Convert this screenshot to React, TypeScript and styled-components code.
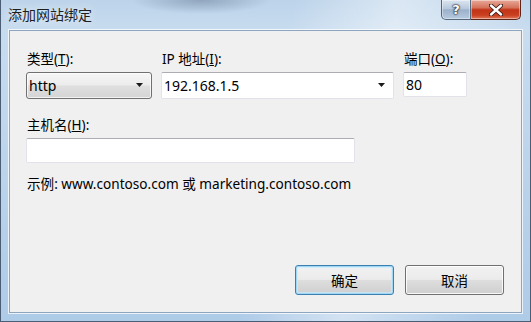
import styled, { createGlobalStyle } from 'styled-components';

const GlobalStyle = createGlobalStyle`
  html, body {
    margin: 0;
    padding: 0;
    width: 531px;
    height: 322px;
    overflow: hidden;
    background: #bcd3ea;
  }
  * {
    box-sizing: border-box;
  }
`;

const uiFont = `"Noto Sans", "Noto Sans CJK SC", "Liberation Sans", sans-serif`;

const Window = styled.div`
  width: 531px;
  height: 322px;
  display: flex;
  flex-direction: column;
  border: 1px solid #4b5d72;
  border-top: none;
  background:
    radial-gradient(ellipse 70px 14px at 200px 0px, rgba(90, 110, 135, 0.45), rgba(90, 110, 135, 0) 100%),
    linear-gradient(100deg, rgba(255, 255, 255, 0) 50%, rgba(255, 255, 255, 0.45) 68%, rgba(255, 255, 255, 0) 92%),
    linear-gradient(to bottom, #bcd3ea 0%, #c8dcef 30px, #aecbe8 100%);
  font-family: ${uiFont};
  color: #000;
`;

const TitleBar = styled.div`
  height: 30px;
  display: flex;
  align-items: flex-start;
  padding-left: 7px;
  flex-shrink: 0;
`;

const Title = styled.div`
  margin-top: 6px;
  font-size: 14px;
  line-height: 18px;
  color: #1e1e1e;
  text-shadow: 0 0 8px rgba(255, 255, 255, 0.9);
`;

const CaptionButtons = styled.div`
  margin-left: auto;
  margin-right: 9px;
  display: flex;
`;

const CaptionButton = styled.div<{ $kind: 'help' | 'close' }>`
  height: 20px;
  width: ${(p) => (p.$kind === 'help' ? '30px' : '50px')};
  display: flex;
  align-items: center;
  justify-content: center;
  border: 1px solid ${(p) => (p.$kind === 'help' ? '#56677c' : '#5e261b')};
  border-top: none;
  border-left-width: ${(p) => (p.$kind === 'close' ? '0' : '1px')};
  border-radius: ${(p) => (p.$kind === 'help' ? '0 0 0 5px' : '0 0 5px 0')};
  box-shadow: inset 0 0 0 1px rgba(255, 255, 255, 0.4);
  background: ${(p) =>
    p.$kind === 'help'
      ? 'linear-gradient(to bottom, #dbe5f0 0%, #b8c9dc 45%, #9cb1ca 52%, #b6cae0 100%)'
      : 'linear-gradient(to bottom, #e8a999 0%, #d5735c 40%, #c23417 52%, #c9401f 80%, #e07a5c 100%)'};
  color: #fff;
  font-family: "DejaVu Sans", sans-serif;
  font-weight: bold;
  font-size: 13px;
  text-shadow: 0 0 1px #223, 0 0 2px #223, 0 0 2px #223;
`;

const Client = styled.div`
  flex: 1;
  margin: 0 8px 8px 8px;
  background: #f0f0f0;
  border: 1px solid #8da5be;
  box-shadow: 0 0 0 1px rgba(255, 255, 255, 0.75);
  display: flex;
  flex-direction: column;
  padding: 20px 17px 17px 16px;
`;

const FieldGrid = styled.div`
  display: grid;
  grid-template-columns: 126px 233px 64px;
  column-gap: 9px;
`;

const Field = styled.div`
  display: flex;
  flex-direction: column;
`;

const Label = styled.div`
  font-size: 13.5px;
  line-height: 16px;
  padding-left: 1px;
  margin-bottom: 5px;
  color: #000;
`;

const DropDown = styled.div`
  height: 27px;
  display: flex;
  align-items: center;
  padding: 0 7px 0 2px;
  font-size: 14px;
  border: 1px solid #707070;
  border-radius: 3px;
  background: linear-gradient(to bottom, #f6f6f6 0%, #ececec 48%, #dfdfdf 52%, #d4d4d4 100%);
  box-shadow: inset 0 0 0 1px rgba(255, 255, 255, 0.7);
`;

const TextBox = styled.div<{ $width?: number; $height?: number }>`
  height: ${(p) => p.$height ?? 25}px;
  width: ${(p) => (p.$width ? `${p.$width}px` : 'auto')};
  display: flex;
  align-items: center;
  padding: 0 7px 0 2px;
  font-size: 14px;
  background: #fff;
  border: 1px solid #e2e3ea;
  border-top-color: #abadb3;
  border-radius: 2px;
`;

const ComboText = styled.span`
  flex: 1;
`;

const Arrow = () => (
  <svg width="8" height="5" viewBox="0 0 8 5">
    <path d="M0 0 H7 L3.5 4 Z" fill="#1a1a1a" />
  </svg>
);

const HostSection = styled.div`
  margin-top: 18px;
  display: flex;
  flex-direction: column;
`;

const Hint = styled.div`
  margin-top: 13px;
  padding-left: 1px;
  font-size: 13.6px;
  line-height: 16px;
  color: #000;
`;

const ButtonRow = styled.div`
  margin-top: auto;
  display: flex;
  justify-content: flex-end;
  gap: 11px;
`;

const Button = styled.div<{ $default?: boolean }>`
  width: 99px;
  height: 30px;
  display: flex;
  align-items: center;
  justify-content: center;
  font-size: 13.5px;
  border-radius: 3px;
  border: 1px solid ${(p) => (p.$default ? '#3c7fb1' : '#707070')};
  background: linear-gradient(to bottom, #f2f2f2 0%, #ebebeb 48%, #dddddd 52%, #cfcfcf 100%);
  box-shadow: ${(p) =>
    p.$default
      ? 'inset 0 0 0 1px #9fd7f5, inset 0 0 0 2px rgba(200, 235, 252, 0.7)'
      : 'inset 0 0 0 1px rgba(255, 255, 255, 0.85)'};
`;

export default function App() {
  return (
    <>
      <GlobalStyle />
      <Window>
        <TitleBar>
          <Title>添加网站绑定</Title>
          <CaptionButtons>
            <CaptionButton $kind="help">?</CaptionButton>
            <CaptionButton $kind="close">
              <svg width="14" height="12" viewBox="0 0 14 12">
                <path d="M2 1.5 L12 10.5 M12 1.5 L2 10.5" stroke="#3a1a14" strokeWidth="4.2" strokeLinecap="round" />
                <path d="M2 1.5 L12 10.5 M12 1.5 L2 10.5" stroke="#fff" strokeWidth="2.4" strokeLinecap="round" />
              </svg>
            </CaptionButton>
          </CaptionButtons>
        </TitleBar>
        <Client>
          <FieldGrid>
            <Field>
              <Label>
                类型(<u>T</u>):
              </Label>
              <DropDown>
                <ComboText>http</ComboText>
                <Arrow />
              </DropDown>
            </Field>
            <Field>
              <Label>
                IP 地址(<u>I</u>):
              </Label>
              <TextBox $height={27}>
                <ComboText>192.168.1.5</ComboText>
                <Arrow />
              </TextBox>
            </Field>
            <Field>
              <Label>
                端口(<u>O</u>):
              </Label>
              <TextBox>80</TextBox>
            </Field>
          </FieldGrid>
          <HostSection>
            <Label>
              主机名(<u>H</u>):
            </Label>
            <TextBox $width={329} />
          </HostSection>
          <Hint>示例: www.contoso.com 或 marketing.contoso.com</Hint>
          <ButtonRow>
            <Button $default>确定</Button>
            <Button>取消</Button>
          </ButtonRow>
        </Client>
      </Window>
    </>
  );
}
